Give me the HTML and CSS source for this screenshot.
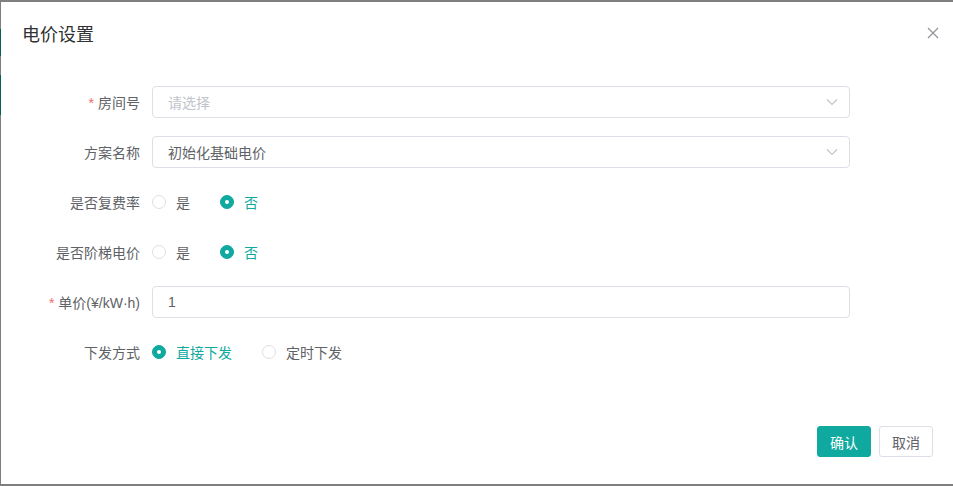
FILE: index.html
```html
<!DOCTYPE html>
<html lang="zh">
<head>
<meta charset="utf-8">
<link rel="stylesheet" href="styles.css">
</head>
<body>
<div class="bg-strip s1"></div>
<div class="bg-strip s2"></div>
<div class="dialog">
  <div class="header">
    <span class="title">电价设置</span>
    <svg class="close" width="12" height="12" viewBox="0 0 12 12"><path d="M1 1L11 11M11 1L1 11" stroke="#909399" stroke-width="1.2" fill="none"/></svg>
  </div>
  <div class="form">
    <div class="row">
      <label class="lbl req">房间号</label>
      <div class="input select"><span class="ph">请选择</span>
        <svg class="arrow" width="12" height="8" viewBox="0 0 12 8"><path d="M1 1.5L6 6.5L11 1.5" stroke="#c0c4cc" stroke-width="1.1" fill="none"/></svg></div>
    </div>
    <div class="row">
      <label class="lbl">方案名称</label>
      <div class="input select"><span class="val">初始化基础电价</span>
        <svg class="arrow" width="12" height="8" viewBox="0 0 12 8"><path d="M1 1.5L6 6.5L11 1.5" stroke="#c0c4cc" stroke-width="1.1" fill="none"/></svg></div>
    </div>
    <div class="row">
      <label class="lbl">是否复费率</label>
      <div class="radios">
        <span class="radio"><i class="dot"></i><span class="rt">是</span></span>
        <span class="radio on"><i class="dot"></i><span class="rt">否</span></span>
      </div>
    </div>
    <div class="row">
      <label class="lbl">是否阶梯电价</label>
      <div class="radios">
        <span class="radio"><i class="dot"></i><span class="rt">是</span></span>
        <span class="radio on"><i class="dot"></i><span class="rt">否</span></span>
      </div>
    </div>
    <div class="row">
      <label class="lbl req">单价(¥/kW·h)</label>
      <div class="input"><span class="val">1</span></div>
    </div>
    <div class="row">
      <label class="lbl">下发方式</label>
      <div class="radios">
        <span class="radio on"><i class="dot"></i><span class="rt">直接下发</span></span>
        <span class="radio"><i class="dot"></i><span class="rt">定时下发</span></span>
      </div>
    </div>
  </div>
  <div class="footer">
    <button class="btn primary">确认</button>
    <button class="btn">取消</button>
  </div>
</div>
</body>
</html>
```
FILE: styles.css
```css
html, body {
  margin: 0;
  padding: 0;
  height: 100%;
}
body {
  background: #7f7f7f;
  font-family: "Liberation Sans", "Noto Sans CJK SC", sans-serif;
  position: relative;
  overflow: hidden;
}
.bg-strip {
  position: absolute;
  left: 0;
  width: 2px;
  background: #03625c;
}
.s1 { top: 29px; height: 27px; }
.s2 { top: 75px; height: 40px; }
.dialog {
  position: relative;
  margin: 2px 0 0 1px;
  width: 952px;
  height: 482px;
  background: #fff;
  box-sizing: border-box;
  display: flex;
  flex-direction: column;
}
.header {
  display: flex;
  align-items: center;
  justify-content: space-between;
  padding: 21px 14px 0 21px;
  height: 24px;
}
.title {
  font-size: 18px;
  line-height: 24px;
  color: #303133;
}
.close {
  margin-top: -4px;
}
.form {
  margin-top: 39px;
  display: flex;
  flex-direction: column;
  gap: 18px;
}
.row {
  display: flex;
  align-items: center;
  height: 32px;
}
.lbl {
  width: 151px;
  box-sizing: border-box;
  padding-right: 12px;
  text-align: right;
  font-size: 14px;
  color: #606266;
  white-space: nowrap;
}
.lbl.req::before {
  content: "*";
  color: #f56c6c;
  margin-right: 4px;
}
.input {
  width: 698px;
  height: 32px;
  box-sizing: border-box;
  border: 1px solid #dcdfe6;
  border-radius: 4px;
  padding: 0 15px;
  display: flex;
  align-items: center;
  justify-content: space-between;
  font-size: 14px;
}
.ph { color: #c0c4cc; }
.val { color: #606266; }
.arrow { margin-right: -4px; }
.radios {
  display: flex;
  align-items: center;
  gap: 30px;
}
.radio {
  display: flex;
  align-items: center;
  font-size: 14px;
  color: #606266;
}
.dot {
  width: 14px;
  height: 14px;
  box-sizing: border-box;
  border: 1px solid #dcdfe6;
  border-radius: 50%;
  margin-right: 10px;
  display: flex;
  align-items: center;
  justify-content: center;
}
.radio.on { color: #0fa99f; }
.radio.on .dot {
  background: #0fa99f;
  border-color: #0fa99f;
}
.radio.on .dot::after {
  content: "";
  width: 4px;
  height: 4px;
  border-radius: 50%;
  background: #fff;
}
.footer {
  margin-top: auto;
  display: flex;
  justify-content: flex-end;
  gap: 8px;
  padding: 0 20px 27px 0;
}
.btn {
  height: 31px;
  width: 54px;
  padding: 0;
  font-family: inherit;
  font-size: 14px;
  border: 1px solid #dcdfe6;
  border-radius: 3px;
  background: #fff;
  color: #606266;
}
.btn.primary {
  background: #0fa99f;
  border-color: #0fa99f;
  color: #fff;
}
```
